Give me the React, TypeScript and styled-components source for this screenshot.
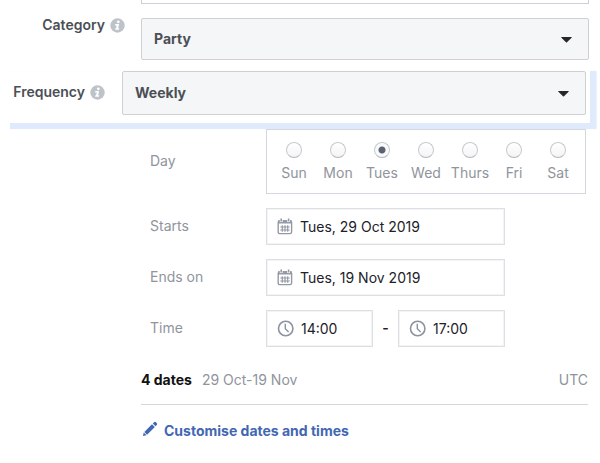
import React, { useState } from "react";
import styled, { createGlobalStyle } from "styled-components";

const GlobalStyle = createGlobalStyle`
  *, *::before, *::after { box-sizing: border-box; }
  body {
    margin: 0;
    background: #fff;
    color: #1d2129;
    font-family: Inter, "Liberation Sans", sans-serif;
    font-size: 14px;
    line-height: 20px;
  }
  input, select, button { font: inherit; }
`;

const Form = styled.form`
  display: flex;
  flex-direction: column;
`;

const PreviousInput = styled.input`
  height: 4px;
  margin: 0 11px 0 141px;
  padding: 0;
  border: 1px solid #ccd0dc;
  border-top: 0;
`;

const CategoryRow = styled.div`
  display: grid;
  grid-template-columns: 125px 1fr;
  column-gap: 16px;
  align-items: start;
  margin: 14px 11px 0 0;
`;

const FrequencyRow = styled.div`
  display: grid;
  grid-template-columns: 95px 1fr;
  column-gap: 17px;
  align-items: start;
  margin: 11px 4px 0 10px;
  padding: 0 4px 8px 0;
  border: solid #dfeafc;
  border-width: 0 6px 6px 0;
  box-shadow: 1px 0 1px #eef4fd;
`;

const FieldLabel = styled.label<{ $top: number }>`
  display: flex;
  align-items: center;
  justify-content: flex-end;
  gap: 5px;
  margin-top: ${(p) => p.$top}px;
  height: 14px;
  color: #4b4f56;
  font-weight: 600;
  white-space: nowrap;
`;

const SelectWrap = styled.div`
  position: relative;
`;

const Select = styled.select<{ $height: number }>`
  display: block;
  width: 100%;
  height: ${(p) => p.$height}px;
  padding: 0 36px 0 12px;
  appearance: none;
  background: #f5f6f7;
  border: 1px solid #ced0d4;
  border-radius: 2px;
  color: #4b4f56;
  font-weight: 700;
`;

const Caret = styled.svg`
  position: absolute;
  top: 50%;
  right: 17px;
  margin-top: -2px;
  pointer-events: none;
`;

const Details = styled.div`
  display: grid;
  grid-template-columns: 116px 1fr;
  row-gap: 14px;
  align-items: center;
  margin: 0 14px 0 150px;
`;

const DetailLabel = styled.label`
  padding-bottom: 2px;
  color: #90949c;
`;

const Days = styled.div`
  display: grid;
  grid-template-columns: repeat(7, 1fr);
  height: 65px;
  padding: 12px 5px 0;
  border: 1px solid #d3d7e0;
`;

const Day = styled.label`
  display: flex;
  flex-direction: column;
  align-items: center;
  gap: 5px;
  color: #90949c;
`;

const Radio = styled.input`
  appearance: none;
  width: 16px;
  height: 16px;
  margin: 0;
  flex: none;
  border: 1px solid #c8cace;
  border-bottom-color: #b4b6ba;
  border-radius: 50%;
  background: linear-gradient(#fff, #f3f4f5);
  &:checked {
    background: radial-gradient(circle, #5d6272 0 3px, #f9fafb 4px);
  }
`;

const DateField = styled.div<{ $width: number }>`
  display: flex;
  align-items: center;
  gap: 7px;
  width: ${(p) => p.$width}px;
  height: 37px;
  padding: 0 10px;
  border: 1px solid #dddfe2;
  box-shadow: inset 0 0 0 1px #f4f4f6;
  svg { flex: none; }
`;

const TextInput = styled.input`
  flex: 1;
  min-width: 0;
  padding: 0;
  border: 0;
  outline: 0;
  background: transparent;
  color: #1d2129;
`;

const TimeRange = styled.div`
  display: flex;
  align-items: center;
`;

const Dash = styled.span`
  width: 25px;
  padding-bottom: 2px;
  text-align: center;
  font-weight: 600;
`;

const Summary = styled.div`
  display: flex;
  align-items: center;
  gap: 10px;
  margin: 23px 12px 0 141px;
  padding-bottom: 14px;
  border-bottom: 1px solid #d3d6db;
  color: #90949c;
`;

const Count = styled.strong`
  color: #111;
  font-weight: 700;
`;

const Zone = styled.span`
  margin-left: auto;
`;

const Customise = styled.button`
  display: flex;
  align-items: flex-start;
  align-self: flex-start;
  gap: 6px;
  margin: 16px 0 0 142px;
  padding: 0;
  border: 0;
  background: none;
  color: #4267b2;
  font-weight: 700;
  cursor: pointer;
`;

const InfoIcon = () => (
  <svg width="15" height="15" viewBox="0 0 15 15" aria-hidden="true">
    <circle cx="7.5" cy="7.5" r="7.2" fill="#bec2c9" />
    <circle cx="8.3" cy="3.8" r="1.4" fill="#fff" />
    <path d="M5.3 6H9.1L8.1 10.2H9.3L8.9 11.8H5.1L5.5 10.2H6.1L6.7 7.5H5Z" fill="#fff" />
  </svg>
);

const CaretIcon = () => (
  <Caret width="11" height="6" viewBox="0 0 11 6" aria-hidden="true">
    <path d="M.6 0H10.4Q11 .2 10.6 .7L6 5.3Q5.5 5.8 5 5.3L.4 .7Q0 .2 .6 0Z" fill="#262729" />
  </Caret>
);

const CalendarIcon = () => (
  <svg width="16" height="17" viewBox="0 0 16 17" fill="none" aria-hidden="true">
    <rect x="1.2" y="2.8" width="13.4" height="12.8" rx="1.6" stroke="#9499a5" strokeWidth="1.4" />
    <path d="M1 5.6V3.5Q1 2.2 2.2 2.2H2.6Q2.8 4.3 4.2 4.3T5.8 2.2H10Q10.2 4.3 11.6 4.3T13.2 2.2H13.6Q14.8 2.2 14.8 3.5V5.6Z" fill="#9499a5" />
    <path d="M2.8 1.2H5.6V4H2.8ZM10.2 1.2H13V4H10.2Z" fill="#fff" />
    <path d="M4.2 .4V3.4M11.6 .4V3.4" stroke="#9499a5" strokeWidth="1.6" />
    <path d="M3.3 9H12.7M3.3 12H12.7M5.3 7.2V13.8M8 7.2V13.8M10.7 7.2V13.8" stroke="#9499a5" strokeWidth="1.2" />
  </svg>
);

const ClockIcon = () => (
  <svg width="17" height="17" viewBox="0 0 17 17" fill="none" stroke="#8d92a0" aria-hidden="true">
    <circle cx="8.7" cy="8.5" r="7.2" strokeWidth="1.6" />
    <path d="M8.3 3.8V8.7L11.6 12" strokeWidth="1.4" />
  </svg>
);

const PencilIcon = () => (
  <svg width="16" height="16" viewBox="0 0 16 16" fill="#4267b2" aria-hidden="true">
    <path d="M1 15L1.7 11.6L4.5 14.3Z" />
    <path d="M2.3 10.9L10 3.3L12.8 6L5.1 13.7Z" />
    <path d="M10.8 2.5L12.3 1Q13 .6 13.7 1.1L14.9 2.3Q15.4 3 14.9 3.7L13.5 5.2Z" />
  </svg>
);

const days = ["Sun", "Mon", "Tues", "Wed", "Thurs", "Fri", "Sat"];

export default function App() {
  const [day, setDay] = useState("Tues");

  return (
    <>
      <GlobalStyle />
      <Form>
        <PreviousInput aria-label="Location" />
        <CategoryRow>
          <FieldLabel $top={0} htmlFor="category">
            Category <InfoIcon />
          </FieldLabel>
          <SelectWrap>
            <Select $height={42} id="category">
              <option>Party</option>
            </Select>
            <CaretIcon />
          </SelectWrap>
        </CategoryRow>
        <FrequencyRow>
          <FieldLabel $top={14} htmlFor="frequency">
            Frequency <InfoIcon />
          </FieldLabel>
          <SelectWrap>
            <Select $height={44} id="frequency">
              <option>Weekly</option>
            </Select>
            <CaretIcon />
          </SelectWrap>
        </FrequencyRow>
        <Details>
          <DetailLabel as="span" id="day-label">Day</DetailLabel>
          <Days role="radiogroup" aria-labelledby="day-label">
            {days.map((name) => (
              <Day key={name}>
                <Radio type="radio" name="day" checked={day === name} onChange={() => setDay(name)} />
                {name}
              </Day>
            ))}
          </Days>
          <DetailLabel htmlFor="starts">Starts</DetailLabel>
          <DateField $width={239}>
            <CalendarIcon />
            <TextInput id="starts" defaultValue="Tues, 29 Oct 2019" />
          </DateField>
          <DetailLabel htmlFor="ends">Ends on</DetailLabel>
          <DateField $width={239}>
            <CalendarIcon />
            <TextInput id="ends" defaultValue="Tues, 19 Nov 2019" />
          </DateField>
          <DetailLabel htmlFor="from">Time</DetailLabel>
          <TimeRange>
            <DateField $width={107}>
              <ClockIcon />
              <TextInput id="from" defaultValue="14:00" />
            </DateField>
            <Dash>-</Dash>
            <DateField $width={107}>
              <ClockIcon />
              <TextInput aria-label="End time" defaultValue="17:00" />
            </DateField>
          </TimeRange>
        </Details>
        <Summary>
          <Count>4 dates</Count>
          <span>29 Oct-19 Nov</span>
          <Zone>UTC</Zone>
        </Summary>
        <Customise type="button">
          <PencilIcon />
          Customise dates and times
        </Customise>
      </Form>
    </>
  );
}
